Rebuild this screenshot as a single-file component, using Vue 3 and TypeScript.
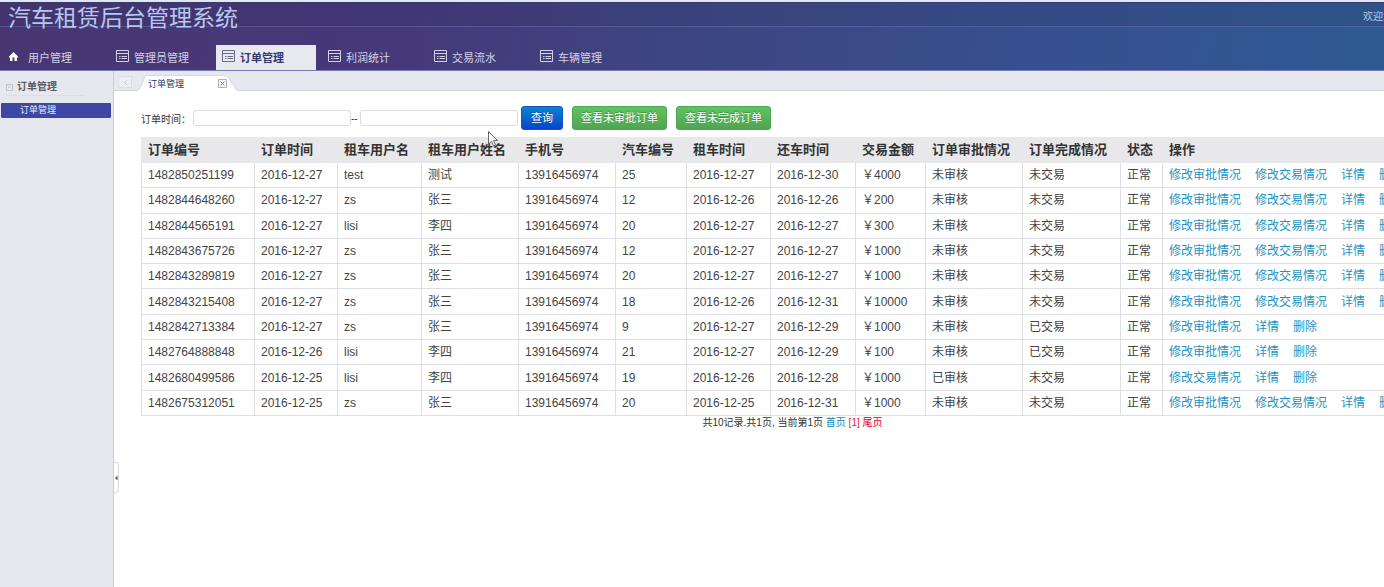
<script setup lang="ts">
import { ref } from 'vue'

interface Order {
  id: string
  date: string
  user: string
  name: string
  car: string
  start: string
  end: string
  amount: string
  audit: string
  deal: string
  actions: string[]
}

const menus = ['用户管理', '管理员管理', '订单管理', '利润统计', '交易流水', '车辆管理']
const activeMenu = ref('订单管理')
const from = ref('')
const to = ref('')

const columns = [
  '订单编号', '订单时间', '租车用户名', '租车用户姓名', '手机号', '汽车编号', '租车时间',
  '还车时间', '交易金额', '订单审批情况', '订单完成情况', '状态', '操作',
]

const AUDIT = '修改审批情况'
const DEAL = '修改交易情况'
const all = [AUDIT, DEAL, '详情', '删除']

function order(
  id: string, date: string, user: string, name: string, car: string, start: string, end: string,
  amount: string, audit = '未审核', deal = '未交易', actions = all,
): Order {
  return { id, date, user, name, car, start, end, amount, audit, deal, actions }
}

const orders: Order[] = [
  order('1482850251199', '2016-12-27', 'test', '测试', '25', '2016-12-27', '2016-12-30', '4000'),
  order('1482844648260', '2016-12-27', 'zs', '张三', '12', '2016-12-26', '2016-12-26', '200'),
  order('1482844565191', '2016-12-27', 'lisi', '李四', '20', '2016-12-27', '2016-12-27', '300'),
  order('1482843675726', '2016-12-27', 'zs', '张三', '12', '2016-12-27', '2016-12-27', '1000'),
  order('1482843289819', '2016-12-27', 'zs', '张三', '20', '2016-12-27', '2016-12-27', '1000'),
  order('1482843215408', '2016-12-27', 'zs', '张三', '18', '2016-12-26', '2016-12-31', '10000'),
  order('1482842713384', '2016-12-27', 'zs', '张三', '9', '2016-12-27', '2016-12-29', '1000', '未审核', '已交易', [AUDIT, '详情', '删除']),
  order('1482764888848', '2016-12-26', 'lisi', '李四', '21', '2016-12-27', '2016-12-29', '100', '未审核', '已交易', [AUDIT, '详情', '删除']),
  order('1482680499586', '2016-12-25', 'lisi', '李四', '19', '2016-12-26', '2016-12-28', '1000', '已审核', '未交易', [DEAL, '详情', '删除']),
  order('1482675312051', '2016-12-25', 'zs', '张三', '20', '2016-12-25', '2016-12-31', '1000'),
]
</script>

<template>
  <div class="app">
    <header class="header">
      <div class="brand">
        <h1>汽车租赁后台管理系统</h1>
        <span class="welcome">欢迎您</span>
      </div>
      <nav class="menu">
        <a
          v-for="(m, i) in menus"
          :key="m"
          href="#"
          :class="{ active: m === activeMenu }"
          @click.prevent="activeMenu = m"
        >
          <svg v-if="i === 0" class="icon" viewBox="0 0 13 13">
            <path d="M3.500 2L8 6.500V7.500H7V11H0V7.500H-1V6.500Z" fill="#fff" />
            <path d="M2.500 7.500h2V11h-2z" fill="#483a78" />
          </svg>
          <svg v-else class="icon" viewBox="0 0 13 13" fill="none" stroke="currentColor">
            <path d="M.5.5h12v11H.5z M.5 3.500h12" />
            <path d="M3 6.500h1.500 M5.500 6.500H11 M3 8.500h1.500 M5.500 8.500H11" />
          </svg>
          <span>{{ m }}</span>
        </a>
      </nav>
    </header>

    <div class="body">
      <aside class="sidebar">
        <h2>
          <svg viewBox="0 0 7 7" fill="none" stroke="#c3c6ce"><path d="M.5.5h6v6h-6z M2 4l1.500-1.500L5 4" /></svg>
          <span>订单管理</span>
        </h2>
        <a href="#" class="side-link" @click.prevent>订单管理</a>
      </aside>

      <main class="main">
        <button class="handle" type="button" aria-label="收起">
          <svg viewBox="0 0 4 6"><path d="M3.500 0.500v5L1 3z" fill="#555" /></svg>
        </button>
        <div class="tabs">
          <button class="prev" type="button" aria-label="上一个">
            <svg viewBox="0 0 5 7" fill="none" stroke="#c3c6cf"><path d="M4 1L1.500 3.500L4 6" /></svg>
          </button>
          <div class="tab">
            <svg class="tab-shape" viewBox="0 0 102 16" preserveAspectRatio="none">
              <path d="M0 16C4 14 5 9 7 4C8 1 9 .5 12 .5H89C92 .5 93 2 95 5L102 16Z" fill="#fff" />
              <path d="M0 15.500C4 14 5 9 7 4C8 1 9 .5 12 .5H89C92 .5 93 2 95 5L102 15.500" fill="none" stroke="#d6d9e1" />
            </svg>
            <span>订单管理</span>
            <button class="close" type="button" aria-label="关闭">
              <svg viewBox="0 0 9 9" fill="none"><path d="M.5.5h8v8h-8z" stroke="#b0b0b0" /><path d="M2.500 2.500l4 4M6.500 2.500l-4 4" stroke="#777" /></svg>
            </button>
          </div>
        </div>

        <div class="content">
          <form class="filter" @submit.prevent>
            <label for="from">订单时间：</label>
            <input id="from" v-model="from" type="text">
            <label class="dash" for="to">--</label>
            <input id="to" v-model="to" type="text">
            <button class="btn blue" type="submit">查询</button>
            <button class="btn green" type="button">查看未审批订单</button>
            <button class="btn green" type="button">查看未完成订单</button>
          </form>

          <table class="orders">
            <thead>
              <tr><th v-for="(c, i) in columns" :key="c" :class="'c' + i" scope="col">{{ c }}</th></tr>
            </thead>
            <tbody>
              <tr v-for="o in orders" :key="o.id">
                <td>{{ o.id }}</td>
                <td>{{ o.date }}</td>
                <td>{{ o.user }}</td>
                <td>{{ o.name }}</td>
                <td>13916456974</td>
                <td>{{ o.car }}</td>
                <td>{{ o.start }}</td>
                <td>{{ o.end }}</td>
                <td>￥{{ o.amount }}</td>
                <td>{{ o.audit }}</td>
                <td>{{ o.deal }}</td>
                <td>正常</td>
                <td><a v-for="a in o.actions" :key="a" href="#" @click.prevent>{{ a }}</a></td>
              </tr>
            </tbody>
          </table>

          <p class="pager">
            共10记录.共1页, 当前第1页 <a href="#" @click.prevent>首页</a> <b>[1]</b> <a class="last" href="#" @click.prevent>尾页</a>
          </p>
        </div>
      </main>
    </div>

    <svg class="cursor" viewBox="0 0 10 16">
      <path d="M.5.5V13L3.500 10.200L5.500 15L7.500 14L5.500 9.500H9.500Z" fill="#fff" stroke="#666" />
    </svg>
  </div>
</template>

<style>
body {
  margin: 0;
}
</style>

<style scoped>
.app {
  display: flex;
  flex-direction: column;
  min-height: 100vh;
  overflow: hidden;
  background: #fff;
  color: #333;
  font-family: "Liberation Sans", "Noto Sans CJK SC", sans-serif;
  font-size: 12px;
}
a {
  text-decoration: none;
}
button {
  padding: 0;
  border: 0;
  background: none;
  font-family: inherit;
  cursor: pointer;
}
.header {
  border-top: 2px solid #e4e6ee;
  border-bottom: 1px solid #7a79b4;
  background: linear-gradient(97deg, #483672 0%, #46397a 30%, #3d4682 50%, #37508f 75%, #2e5a92 100%);
}
.brand {
  display: flex;
  justify-content: space-between;
  height: 23px;
  border-top: 1px solid #343a72;
  border-bottom: 1px solid rgba(120, 130, 190, 0.4);
  padding-left: 8px;
  background: rgba(40, 50, 90, 0.15);
}
h1 {
  margin: 0;
  color: #b6c8ee;
  font-size: 23px;
  font-weight: 400;
  line-height: 30px;
  white-space: nowrap;
}
.welcome {
  width: 21px;
  color: #b4cbee;
  font-size: 10px;
  line-height: 28px;
  white-space: nowrap;
}
.menu {
  display: flex;
  gap: 6px;
  padding: 18px 0 0 4px;
}
.menu a {
  display: flex;
  align-items: center;
  gap: 5px;
  box-sizing: border-box;
  width: 100px;
  height: 25px;
  padding: 0 0 2px 6px;
  color: #d3d2e4;
  font-size: 11px;
  white-space: nowrap;
}
.menu a.active {
  background: #e8e9ef;
  color: #33376d;
  font-weight: 700;
}
.menu a.active .icon {
  color: #6a6d88;
}
.icon {
  width: 13px;
  height: 13px;
  overflow: visible;
}
.body {
  display: flex;
  flex: 1;
}
.sidebar {
  flex: none;
  box-sizing: border-box;
  width: 114px;
  border-right: 1px solid #c9ccd6;
  padding: 8px 2px 0 1px;
  background: #e6e8ed;
}
h2 {
  display: flex;
  align-items: center;
  gap: 4px;
  margin: 0 27px 7px 5px;
  border-bottom: 1px solid #dcdee4;
  color: #5c5c62;
  font-size: 10px;
  line-height: 16px;
}
h2 svg {
  width: 7px;
  height: 7px;
}
.side-link {
  display: block;
  border-radius: 1px;
  padding-left: 19px;
  background: #3e48a4;
  color: #e8eaff;
  font-size: 9px;
  line-height: 15px;
}
.main {
  position: relative;
  flex: 1;
  min-width: 0;
  overflow: hidden;
}
.tabs {
  display: flex;
  align-items: flex-end;
  gap: 5px;
  height: 19px;
  border-bottom: 1px solid #d3d6de;
  padding-left: 4px;
  background: #e6e8ed;
}
.prev {
  width: 14px;
  height: 12px;
  margin-bottom: 2px;
  border: 1px solid #dcdee4;
  background: #eceef2;
  line-height: 0;
}
.prev svg {
  width: 5px;
  height: 7px;
}
.tab {
  position: relative;
  display: flex;
  align-items: center;
  justify-content: space-between;
  box-sizing: border-box;
  width: 100px;
  height: 16px;
  margin-bottom: -1px;
  padding: 0 10px 0 11px;
  color: #243a6b;
  font-size: 9px;
}
.tab-shape {
  position: absolute;
  inset: 0;
  width: 100%;
  height: 100%;
}
.tab span,
.close {
  position: relative;
}
.close,
.close svg {
  display: block;
  width: 9px;
  height: 9px;
}
.handle {
  position: absolute;
  top: 391px;
  left: 0;
  display: flex;
  align-items: center;
  width: 5px;
  height: 31px;
  border: 1px solid #d8dae0;
  border-left: 0;
  border-radius: 0 3px 3px 0;
}
.handle svg {
  width: 4px;
  height: 6px;
}
.content {
  width: calc(100% + 60px);
  box-sizing: border-box;
  padding: 15px 0 0 27px;
}
.filter {
  display: flex;
  align-items: center;
  margin-bottom: 7px;
}
.filter label {
  width: 52px;
  font-size: 10px;
  white-space: nowrap;
}
.filter .dash {
  width: 9px;
}
.filter input {
  box-sizing: border-box;
  width: 158px;
  height: 16px;
  border: 1px solid #dcdce0;
  border-radius: 3px;
  padding: 0 4px;
  background: #fff;
  font-size: 10px;
}
.btn {
  height: 24px;
  border: 1px solid #4fa551;
  border-radius: 3px;
  padding: 0 8px;
  color: #fff;
  font-size: 11px;
  line-height: 22px;
  text-shadow: 0 -1px 0 rgba(0, 0, 0, 0.25);
  white-space: nowrap;
}
.btn + .btn {
  margin-left: 9px;
}
.blue {
  margin-left: 3px;
  border-color: #0b58c0;
  padding: 0 9px;
  background: linear-gradient(#0a84cc, #0844cc);
}
.green {
  background: linear-gradient(#60c260, #51a551);
}
.orders {
  width: 100%;
  height: 279px;
  border-collapse: collapse;
  border: 1px solid #dedee4;
  table-layout: fixed;
}
th,
td {
  overflow: hidden;
  border: 1px solid #dedee4;
  padding: 0 0 0 6px;
  line-height: 18px;
  text-align: left;
  white-space: nowrap;
}
th {
  height: 24px;
  border-color: #e8e8eb;
  background: #e8e8ea;
  font-size: 13px;
}
td {
  height: 24px;
  color: #444;
}
.c0 { width: 106px; }
.c1 { width: 76px; }
.c2, .c6 { width: 77px; }
.c7 { width: 78px; }
.c3, .c4, .c9 { width: 90px; }
.c10 { width: 91px; }
.c5 { width: 64px; }
.c8 { width: 63px; }
.c11 { width: 35px; }
td a {
  margin-right: 14px;
  color: #1c93c2;
}
.pager {
  margin: 0;
  font-size: 10px;
  line-height: 14px;
  text-align: center;
}
.pager a {
  color: #0f86b8;
}
.pager b {
  color: #e8203c;
  font-weight: 400;
}
.pager a.last {
  color: #e0001c;
}
.cursor {
  position: absolute;
  top: 131px;
  left: 488px;
  width: 10px;
  height: 16px;
}
</style>
